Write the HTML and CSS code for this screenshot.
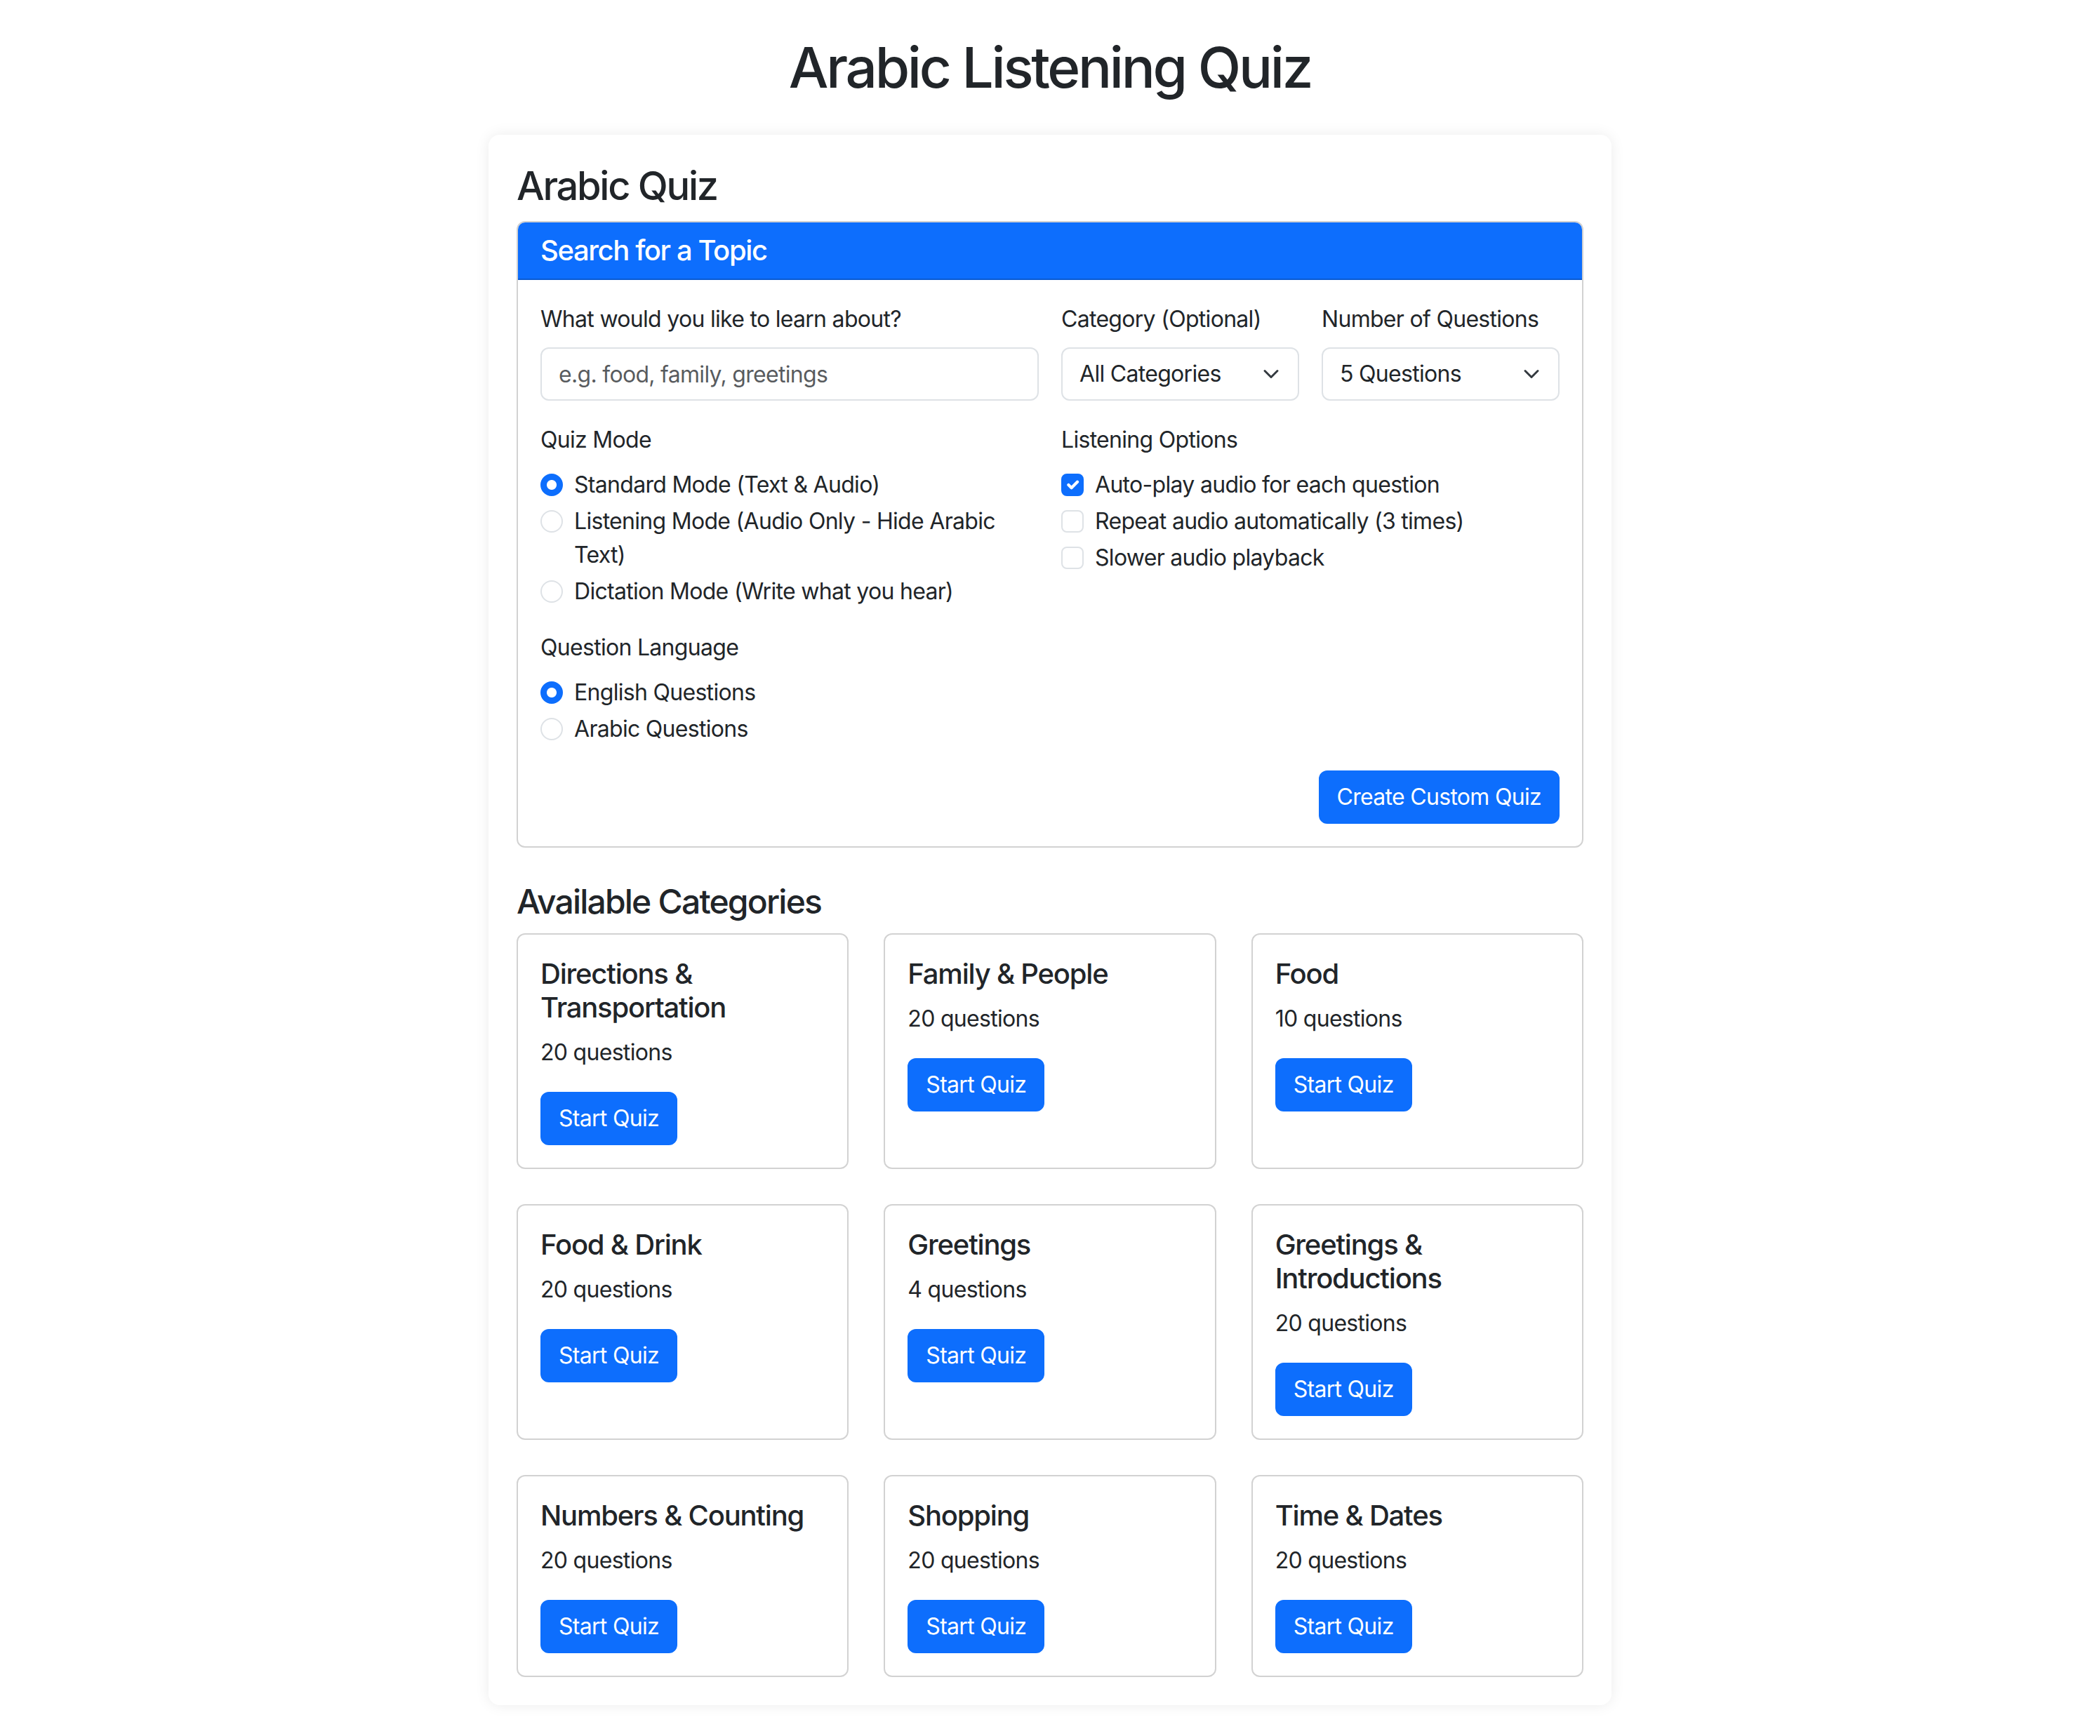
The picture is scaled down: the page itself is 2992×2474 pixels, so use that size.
FILE: index.html
```html
<!DOCTYPE html>
<html lang="en">
<head>
<meta charset="utf-8">
<title>Arabic Listening Quiz</title>
<link rel="stylesheet" href="styles.css">
</head>
<body>
<main class="page">
  <h1 class="page-title">Arabic Listening Quiz</h1>

  <div class="quiz-panel">
    <h3 class="panel-title">Arabic Quiz</h3>

    <section class="search-card">
      <div class="search-header">
        <h5 class="search-heading">Search for a Topic</h5>
      </div>
      <form class="search-body">
        <div class="form-grid">
          <div class="field field-topic">
            <label class="form-label" for="topic">What would you like to learn about?</label>
            <input class="form-control" id="topic" type="text" placeholder="e.g. food, family, greetings">
          </div>
          <div class="field">
            <label class="form-label" for="category">Category (Optional)</label>
            <div class="select-wrap">
              <select class="form-select" id="category">
                <option>All Categories</option>
              </select>
              <svg class="select-chevron" viewBox="0 0 16 16" width="24" height="24" aria-hidden="true"><path d="m2 5 6 6 6-6" fill="none" stroke="#343a40" stroke-width="2" stroke-linecap="round" stroke-linejoin="round"/></svg>
            </div>
          </div>
          <div class="field">
            <label class="form-label" for="count">Number of Questions</label>
            <div class="select-wrap">
              <select class="form-select" id="count">
                <option>5 Questions</option>
              </select>
              <svg class="select-chevron" viewBox="0 0 16 16" width="24" height="24" aria-hidden="true"><path d="m2 5 6 6 6-6" fill="none" stroke="#343a40" stroke-width="2" stroke-linecap="round" stroke-linejoin="round"/></svg>
            </div>
          </div>

          <div class="field field-left">
            <div class="form-label">Quiz Mode</div>
            <label class="check"><input class="check-radio" type="radio" name="mode" checked><span>Standard Mode (Text &amp; Audio)</span></label>
            <label class="check"><input class="check-radio" type="radio" name="mode"><span>Listening Mode (Audio Only - Hide Arabic Text)</span></label>
            <label class="check"><input class="check-radio" type="radio" name="mode"><span>Dictation Mode (Write what you hear)</span></label>
          </div>
          <div class="field field-right">
            <div class="form-label">Listening Options</div>
            <label class="check"><span class="check-box is-checked"><svg viewBox="0 0 20 20" width="28" height="28" aria-hidden="true"><path d="m6 10 3 3 6-6" fill="none" stroke="#fff" stroke-width="3" stroke-linecap="round" stroke-linejoin="round"/></svg></span><span>Auto-play audio for each question</span></label>
            <label class="check"><span class="check-box"></span><span>Repeat audio automatically (3 times)</span></label>
            <label class="check"><span class="check-box"></span><span>Slower audio playback</span></label>
          </div>

          <div class="field field-left">
            <div class="form-label">Question Language</div>
            <label class="check"><input class="check-radio" type="radio" name="lang" checked><span>English Questions</span></label>
            <label class="check"><input class="check-radio" type="radio" name="lang"><span>Arabic Questions</span></label>
          </div>
        </div>
        <div class="form-actions">
          <button class="btn" type="button">Create Custom Quiz</button>
        </div>
      </form>
    </section>

    <h4 class="section-title">Available Categories</h4>
    <div class="category-grid">
      <div class="category-card">
        <h5 class="category-name">Directions &amp; Transportation</h5>
        <p class="category-count">20 questions</p>
        <button class="btn" type="button">Start Quiz</button>
      </div>
      <div class="category-card">
        <h5 class="category-name">Family &amp; People</h5>
        <p class="category-count">20 questions</p>
        <button class="btn" type="button">Start Quiz</button>
      </div>
      <div class="category-card">
        <h5 class="category-name">Food</h5>
        <p class="category-count">10 questions</p>
        <button class="btn" type="button">Start Quiz</button>
      </div>
      <div class="category-card">
        <h5 class="category-name">Food &amp; Drink</h5>
        <p class="category-count">20 questions</p>
        <button class="btn" type="button">Start Quiz</button>
      </div>
      <div class="category-card">
        <h5 class="category-name">Greetings</h5>
        <p class="category-count">4 questions</p>
        <button class="btn" type="button">Start Quiz</button>
      </div>
      <div class="category-card">
        <h5 class="category-name">Greetings &amp; Introductions</h5>
        <p class="category-count">20 questions</p>
        <button class="btn" type="button">Start Quiz</button>
      </div>
      <div class="category-card">
        <h5 class="category-name">Numbers &amp; Counting</h5>
        <p class="category-count">20 questions</p>
        <button class="btn" type="button">Start Quiz</button>
      </div>
      <div class="category-card">
        <h5 class="category-name">Shopping</h5>
        <p class="category-count">20 questions</p>
        <button class="btn" type="button">Start Quiz</button>
      </div>
      <div class="category-card">
        <h5 class="category-name">Time &amp; Dates</h5>
        <p class="category-count">20 questions</p>
        <button class="btn" type="button">Start Quiz</button>
      </div>
    </div>
  </div>
</main>
</body>
</html>
```

FILE: styles.css
```css
* {
  box-sizing: border-box;
}

html, body {
  margin: 0;
  background: #fff;
}

body {
  font-family: "Inter", "Liberation Sans", sans-serif;
  font-size: 32px;
  line-height: 1.5;
  letter-spacing: -0.7px;
  color: #212529;
}

.page {
  padding: 48px 0 48px;
}

.page-title {
  margin: 0 0 48px;
  text-align: center;
  font-size: 80px;
  font-weight: 500;
  line-height: 1.2;
  letter-spacing: -3.3px;
}

.quiz-panel {
  width: 1600px;
  margin: 0 auto;
  padding: 40px;
  background: #fff;
  border-radius: 16px;
  box-shadow: 0 0 20px rgba(0, 0, 0, 0.08);
}

.panel-title {
  margin: 0 0 16px;
  font-size: 56px;
  font-weight: 500;
  line-height: 1.2;
  letter-spacing: -2.3px;
}

/* Search card */
.search-card {
  border: 2px solid rgba(0, 0, 0, 0.175);
  border-radius: 12px;
  margin-bottom: 48px;
}

.search-header {
  background: #0d6efd;
  color: #fff;
  padding: 16px 32px;
  border-bottom: 2px solid rgba(0, 0, 0, 0.175);
  border-radius: 10px 10px 0 0;
}

.search-heading {
  margin: 0;
  font-size: 40px;
  font-weight: 500;
  line-height: 1.2;
  letter-spacing: -1.4px;
}

.search-body {
  padding: 32px;
  margin: 0;
}

.form-grid {
  display: grid;
  grid-template-columns: 710px 339px 339px;
  column-gap: 32px;
  row-gap: 32px;
}

.field-left {
  grid-column: 1;
}

.field-right {
  grid-column: 2 / 4;
}

.form-label {
  display: block;
  margin-bottom: 16px;
}

.form-control,
.form-select {
  display: block;
  width: 100%;
  height: 76px;
  padding: 12px 24px;
  font: inherit;
  letter-spacing: inherit;
  color: #212529;
  background: #fff;
  border: 2px solid #dee2e6;
  border-radius: 12px;
  appearance: none;
  -webkit-appearance: none;
  outline: none;
}

.form-control::placeholder {
  color: rgba(33, 37, 41, 0.75);
}

.form-select {
  padding-right: 72px;
}

.select-wrap {
  position: relative;
}

.select-chevron {
  position: absolute;
  right: 28px;
  top: 26px;
  pointer-events: none;
}

.check {
  display: grid;
  grid-template-columns: 32px 1fr;
  column-gap: 16px;
  align-items: start;
  margin-bottom: 4px;
}

.check:last-child {
  margin-bottom: 0;
}

.check-radio {
  appearance: none;
  -webkit-appearance: none;
  width: 32px;
  height: 32px;
  margin: 8px 0 0;
  border: 2px solid #dee2e6;
  border-radius: 50%;
  background: #fff;
}

.check-radio:checked {
  border-color: #0d6efd;
  background: radial-gradient(circle, #fff 0 6.5px, #0d6efd 7.5px);
}

.check-box {
  display: flex;
  align-items: center;
  justify-content: center;
  width: 32px;
  height: 32px;
  margin-top: 8px;
  border: 2px solid #dee2e6;
  border-radius: 8px;
  background: #fff;
}

.check-box.is-checked {
  background: #0d6efd;
  border-color: #0d6efd;
}

.form-actions {
  display: flex;
  justify-content: flex-end;
  margin-top: 35px;
}

.btn {
  display: inline-block;
  padding: 12px 24px;
  font: inherit;
  letter-spacing: inherit;
  line-height: 48px;
  color: #fff;
  background: #0d6efd;
  border: 2px solid #0d6efd;
  border-radius: 12px;
  cursor: pointer;
}

/* Categories */
.section-title {
  margin: 0 0 16px;
  font-size: 48px;
  font-weight: 500;
  line-height: 1.2;
  letter-spacing: -1.8px;
}

.category-grid {
  display: grid;
  grid-template-columns: repeat(3, 1fr);
  gap: 50px;
}

.category-card {
  border: 2px solid rgba(0, 0, 0, 0.175);
  border-radius: 12px;
  padding: 32px;
}

.category-name {
  margin: 0 0 16px;
  font-size: 40px;
  font-weight: 500;
  line-height: 1.2;
  letter-spacing: -1.2px;
}

.category-count {
  margin: 0 0 32px;
}
```
